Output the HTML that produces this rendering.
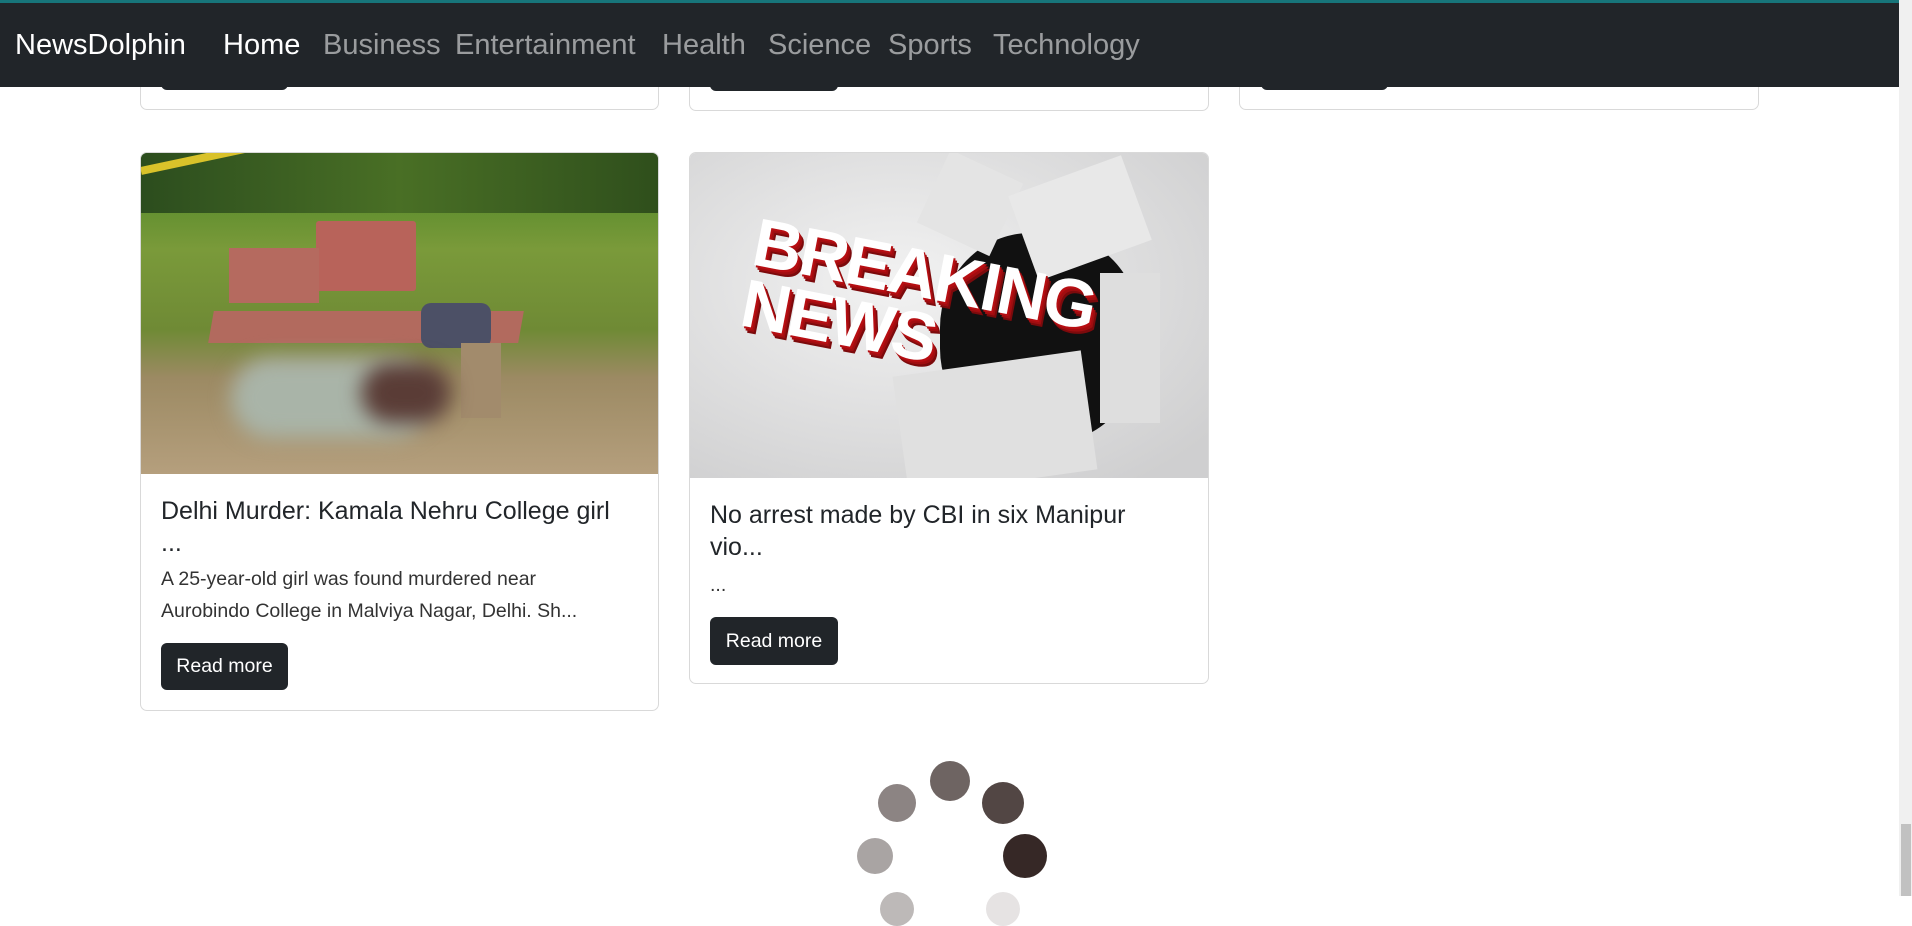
<!DOCTYPE html>
<html><head><meta charset="utf-8"><style>
*{box-sizing:border-box;margin:0;padding:0}
body{width:1912px;height:896px;overflow:hidden;background:#fff;font-family:"Liberation Sans",sans-serif;position:relative;color:#212529}
.nav{position:absolute;left:0;top:0;width:1899px;height:87px;background:#212529;border-top:3px solid #17757a}
.nav span{position:absolute;top:26px;font-size:29px;color:rgba(255,255,255,.55);white-space:nowrap}
.sb{position:absolute;left:1899px;top:0;width:13px;height:896px;background:#f0f0f0}
.thumb{position:absolute;left:1901px;top:824px;width:10px;height:72px;background:#c1c1c1}
.card{position:absolute;border:1px solid #d9d9d9;border-radius:7px;background:#fff;overflow:hidden}
.btn{position:absolute;background:#212529;color:#fff;border-radius:6px;font-size:19.5px;display:flex;align-items:center;justify-content:center}
.t{position:absolute;font-size:25px;line-height:32px;color:#212529}
.p{position:absolute;font-size:19.5px;line-height:32px;color:#333}
.d{position:absolute;border-radius:50%}
</style></head><body>
<div class="card" style="left:140px;top:-20px;width:519px;height:130px"><div class="btn" style="left:20px;top:62px;width:127px;height:47px"></div></div>
<div class="card" style="left:689px;top:-20px;width:520px;height:131px"><div class="btn" style="left:20px;top:63px;width:128px;height:47px"></div></div>
<div class="card" style="left:1239px;top:-20px;width:520px;height:130px"><div class="btn" style="left:21px;top:62px;width:127px;height:47px"></div></div>

<div class="card" style="left:140px;top:152px;width:519px;height:559px">
 <div style="position:absolute;left:0;top:0;width:517px;height:321px;overflow:hidden;background:linear-gradient(180deg,#3f6b2a 0%,#5f8e2e 15%,#7a9a3a 30%,#6f8a35 55%,#9c8a63 70%,#b59f7d 100%)">
  <div style="position:absolute;left:0;top:0;width:517px;height:60px;background:linear-gradient(90deg,#2c4d1e,#496f25,#2f4f1c)"></div>
  <div style="position:absolute;left:0;top:14px;width:200px;height:8px;background:#d9c22a;transform:rotate(-12deg);transform-origin:left"></div>
  <div style="position:absolute;left:175px;top:68px;width:100px;height:70px;background:#b8635a;border-radius:3px"></div>
  <div style="position:absolute;left:88px;top:95px;width:90px;height:55px;background:#b56a5f"></div>
  <div style="position:absolute;left:70px;top:158px;width:310px;height:32px;background:#b26a5e;transform:skewX(-10deg)"></div>
  <div style="position:absolute;left:280px;top:150px;width:70px;height:45px;background:#4c5066;border-radius:10px"></div>
  <div style="position:absolute;left:320px;top:190px;width:40px;height:75px;background:#a28b6c"></div>
  <div style="position:absolute;left:90px;top:205px;width:200px;height:80px;background:#a9b4a8;border-radius:40px;filter:blur(10px)"></div>
  <div style="position:absolute;left:220px;top:210px;width:90px;height:60px;background:#5a3c36;border-radius:30px;filter:blur(10px)"></div>
 </div>
 <div class="t" style="left:20px;top:342px">Delhi Murder: Kamala Nehru College girl<br>...</div>
 <div class="p" style="left:20px;top:410px">A 25-year-old girl was found murdered near<br>Aurobindo College in Malviya Nagar, Delhi. Sh...</div>
 <div class="btn" style="left:20px;top:490px;width:127px;height:47px">Read more</div>
</div>

<div class="card" style="left:689px;top:152px;width:520px;height:532px">
 <div style="position:absolute;left:0;top:0;width:518px;height:325px;overflow:hidden;background:radial-gradient(ellipse at 40% 40%,#f2f2f2,#cfcfd0 90%)">
  <div style="position:absolute;left:250px;top:80px;width:200px;height:210px;background:#111;border-radius:45%;"></div>
  <div style="position:absolute;left:240px;top:10px;width:80px;height:80px;background:#e4e4e4;transform:rotate(25deg)"></div>
  <div style="position:absolute;left:330px;top:20px;width:120px;height:90px;background:#e8e8e8;transform:rotate(-20deg)"></div>
  <div style="position:absolute;left:410px;top:120px;width:60px;height:150px;background:#dedede"></div>
  <div style="position:absolute;left:210px;top:210px;width:190px;height:120px;background:#e0e0e0;transform:rotate(-8deg)"></div>
  <div style="position:absolute;left:70px;top:58px;font:900 68px/62px 'Liberation Sans',sans-serif;color:#fff;text-shadow:2px 2px 0 #b70e12,4px 4px 0 #a00d10,6px 6px 0 #7c0a0c;transform:rotate(11deg);transform-origin:left top;letter-spacing:-2px">BREAKING<br>NEWS</div>
 </div>
 <div class="t" style="left:20px;top:346px">No arrest made by CBI in six Manipur<br>vio...</div>
 <div class="p" style="left:20px;top:416px">...</div>
 <div class="btn" style="left:20px;top:464px;width:128px;height:48px">Read more</div>
</div>

<div class="nav">
 <span style="left:15px;color:#fff">NewsDolphin</span>
 <span style="left:223px;color:#fff">Home</span>
 <span style="left:323px">Business</span>
 <span style="left:455px">Entertainment</span>
 <span style="left:662px">Health</span>
 <span style="left:768px">Science</span>
 <span style="left:888px">Sports</span>
 <span style="left:993px">Technology</span>
</div>

<div class="d" style="left:930px;top:761px;width:40px;height:40px;background:#6e6462"></div>
<div class="d" style="left:982px;top:782px;width:42px;height:42px;background:#524644"></div>
<div class="d" style="left:1003px;top:834px;width:44px;height:44px;background:#362826"></div>
<div class="d" style="left:878px;top:784px;width:38px;height:38px;background:#8c8483"></div>
<div class="d" style="left:857px;top:838px;width:36px;height:36px;background:#a9a4a3"></div>
<div class="d" style="left:880px;top:892px;width:34px;height:34px;background:#bdb9b8"></div>
<div class="d" style="left:986px;top:892px;width:34px;height:34px;background:#e6e3e3"></div>

<div class="sb"></div><div class="thumb"></div>
</body></html>
